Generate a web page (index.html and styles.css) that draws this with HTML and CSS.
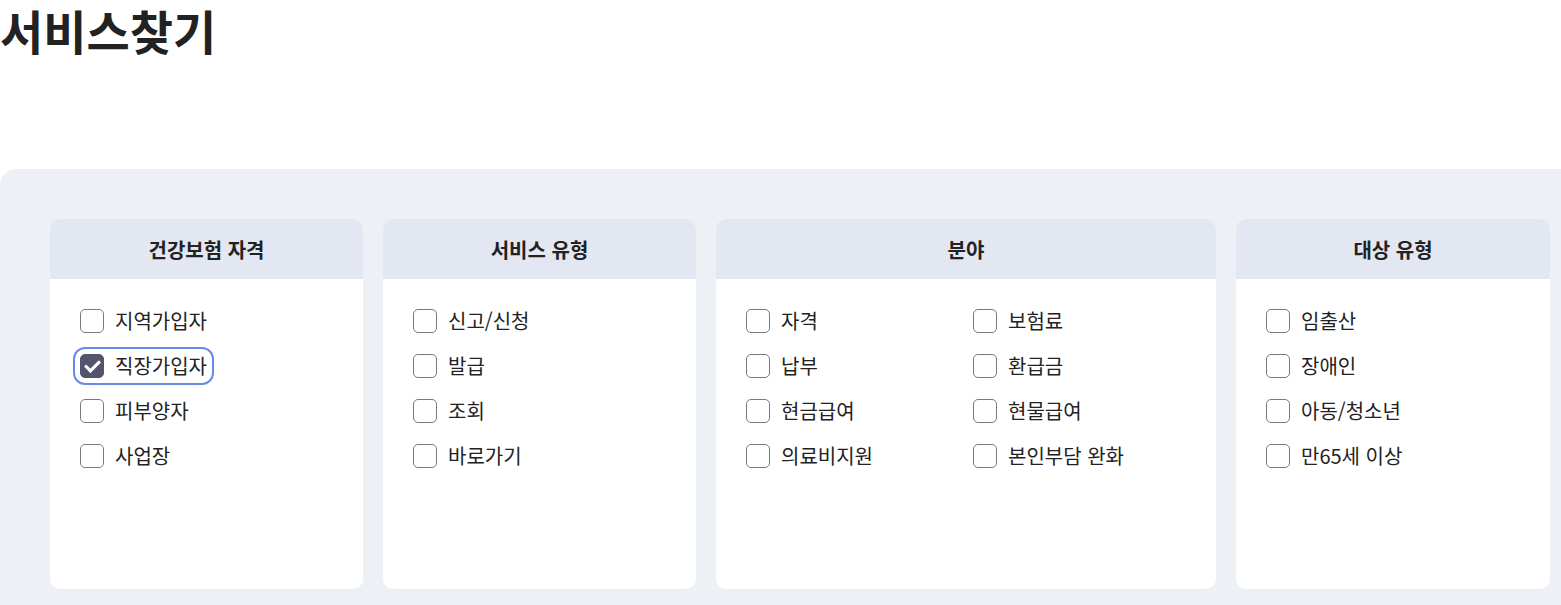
FILE: index.html
```html
<!DOCTYPE html>
<html lang="ko">
<head>
<meta charset="utf-8">
<title>서비스찾기</title>
<link rel="stylesheet" href="styles.css">
</head>
<body>
<h1 class="page-title">서비스찾기</h1>
<section class="panel">
  <div class="cards">
    <div class="card">
      <div class="card-head">건강보험 자격</div>
      <div class="card-body">
        <label class="opt"><input type="checkbox"><span>지역가입자</span></label>
        <label class="opt focus"><input type="checkbox" checked><span>직장가입자</span></label>
        <label class="opt"><input type="checkbox"><span>피부양자</span></label>
        <label class="opt"><input type="checkbox"><span>사업장</span></label>
      </div>
    </div>
    <div class="card">
      <div class="card-head">서비스 유형</div>
      <div class="card-body">
        <label class="opt"><input type="checkbox"><span>신고/신청</span></label>
        <label class="opt"><input type="checkbox"><span>발급</span></label>
        <label class="opt"><input type="checkbox"><span>조회</span></label>
        <label class="opt"><input type="checkbox"><span>바로가기</span></label>
      </div>
    </div>
    <div class="card">
      <div class="card-head">분야</div>
      <div class="card-body two">
        <label class="opt"><input type="checkbox"><span>자격</span></label>
        <label class="opt"><input type="checkbox"><span>보험료</span></label>
        <label class="opt"><input type="checkbox"><span>납부</span></label>
        <label class="opt"><input type="checkbox"><span>환급금</span></label>
        <label class="opt"><input type="checkbox"><span>현금급여</span></label>
        <label class="opt"><input type="checkbox"><span>현물급여</span></label>
        <label class="opt"><input type="checkbox"><span>의료비지원</span></label>
        <label class="opt"><input type="checkbox"><span>본인부담 완화</span></label>
      </div>
    </div>
    <div class="card">
      <div class="card-head">대상 유형</div>
      <div class="card-body">
        <label class="opt"><input type="checkbox"><span>임출산</span></label>
        <label class="opt"><input type="checkbox"><span>장애인</span></label>
        <label class="opt"><input type="checkbox"><span>아동/청소년</span></label>
        <label class="opt"><input type="checkbox"><span>만65세 이상</span></label>
      </div>
    </div>
  </div>
</section>
</body>
</html>
```
FILE: styles.css
```css
html, body {
  margin: 0;
  padding: 0;
  overflow: hidden;
  background: #fff;
  font-family: "Noto Sans CJK KR", "Noto Sans", sans-serif;
  color: #222;
}
.page-title {
  margin: 0;
  font-size: 47px;
  font-weight: 700;
  line-height: 60px;
  color: #222;
}
.panel {
  margin-top: 109px;
  width: 1600px;
  background: #edf0f5;
  border-radius: 16px 0 0 0;
  padding: 50px 0 16px 50px;
}
.cards {
  display: grid;
  grid-template-columns: 313px 313px 500px 314px;
  column-gap: 20px;
}
.card {
  background: #fff;
  border-radius: 10px;
  overflow: hidden;
  height: 370px;
  display: flex;
  flex-direction: column;
}
.card-head {
  height: 60px;
  background: #e3e7f1;
  display: flex;
  align-items: center;
  justify-content: center;
  font-size: 20px;
  font-weight: 700;
  color: #222;
}
.card-body {
  padding: 25px 30px 0 30px;
  display: flex;
  flex-direction: column;
  align-items: flex-start;
  gap: 11px;
}
.card-body.two {
  display: grid;
  grid-template-columns: 1fr 1fr;
  column-gap: 14px;
  row-gap: 11px;
  justify-items: start;
}
.opt {
  display: flex;
  align-items: center;
  gap: 11px;
  padding: 5px;
  margin-left: -5px;
  border-radius: 10px;
  font-size: 20px;
  line-height: 24px;
  height: 34px;
  box-sizing: border-box;
  color: #222;
  cursor: pointer;
}
.opt.focus {
  outline: 2px solid #6b8ae6;
}
.opt input {
  appearance: none;
  -webkit-appearance: none;
  margin: 0;
  width: 24px;
  height: 24px;
  border: 1px solid #7a7a7a;
  border-radius: 5px;
  background: #fff;
  flex: none;
  display: grid;
  place-items: center;
}
.opt input:checked {
  background: #54546e;
  border-color: #54546e;
}
.opt input:checked::after {
  content: "";
  width: 6px;
  height: 12px;
  border: solid #fff;
  border-width: 0 3px 3px 0;
  transform: translateY(-2px) rotate(45deg);
}
```
